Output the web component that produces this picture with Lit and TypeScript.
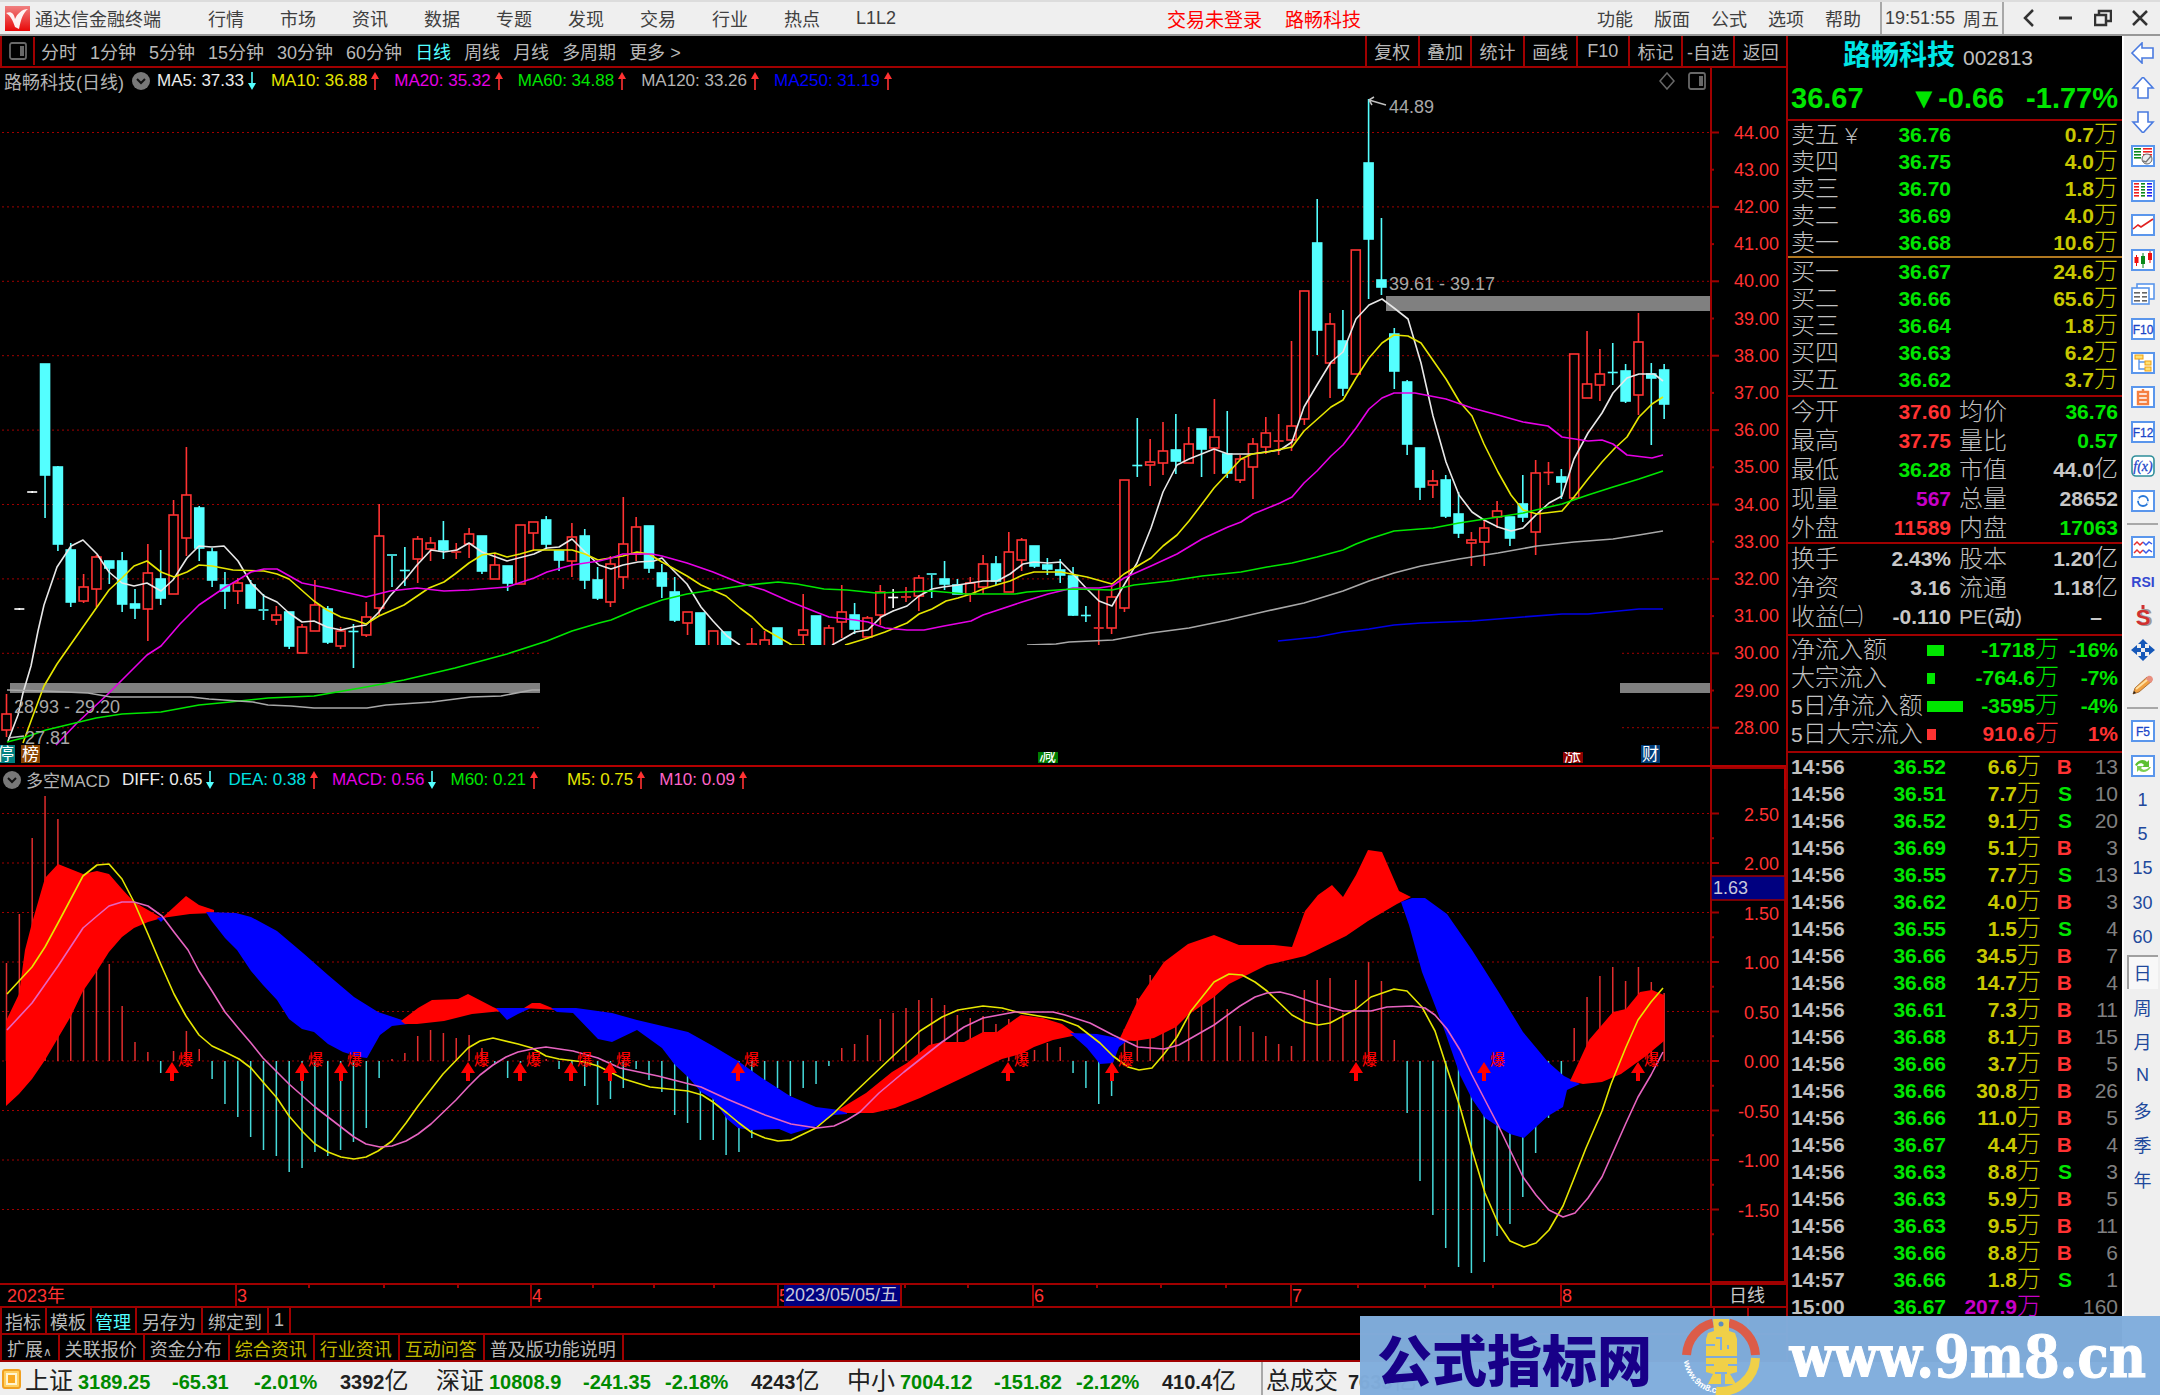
import { LitElement, html, svg, css } from "lit";
import { customElement, state } from "lit/decorators.js";
import { classMap } from "lit/directives/class-map.js";

/* ---------- quote data ---------- */

const MENU = ["行情", "市场", "资讯", "数据", "专题", "发现", "交易", "行业", "热点", "L1L2"];
const TOOLS = ["功能", "版面", "公式", "选项", "帮助"];
const PERIODS = ["分时", "1分钟", "5分钟", "15分钟", "30分钟", "60分钟", "日线", "周线", "月线", "多周期"];
const ACTIONS = ["复权", "叠加", "统计", "画线", "F10", "标记", "-自选", "返回"];

type Legend = [text: string, tone: string, up: boolean];
const MA_LEGEND: Legend[] = [
  ["MA5: 37.33", "t-white", false],
  ["MA10: 36.88", "t-yellow", true],
  ["MA20: 35.32", "t-magenta", true],
  ["MA60: 34.88", "t-green", true],
  ["MA120: 33.26", "t-gray", true],
  ["MA250: 31.19", "t-blue", true],
];
const MACD_LEGEND: Legend[] = [
  ["DIFF: 0.65", "t-white", false],
  ["DEA: 0.38", "t-cyan", true],
  ["MACD: 0.56", "t-magenta", false],
  ["M60: 0.21", "t-green", true],
  ["M5: 0.75", "t-yellow gap", true],
  ["M10: 0.09", "t-pink", true],
];

const ASKS = [["卖五", "36.76", "0.7"], ["卖四", "36.75", "4.0"], ["卖三", "36.70", "1.8"], ["卖二", "36.69", "4.0"], ["卖一", "36.68", "10.6"]];
const BIDS = [["买一", "36.67", "24.6"], ["买二", "36.66", "65.6"], ["买三", "36.64", "1.8"], ["买四", "36.63", "6.2"], ["买五", "36.62", "3.7"]];
const STATS_A = [
  ["今开", "37.60", "red", "均价", "36.76", "", "green"],
  ["最高", "37.75", "red", "量比", "0.57", "", "green"],
  ["最低", "36.28", "green", "市值", "44.0", "亿", "gray"],
  ["现量", "567", "purple", "总量", "28652", "", "gray"],
  ["外盘", "11589", "red", "内盘", "17063", "", "green"],
];
const STATS_B = [
  ["换手", "2.43%", "gray", "股本", "1.20", "亿", "gray"],
  ["净资", "3.16", "gray", "流通", "1.18", "亿", "gray"],
  ["收益㈡", "-0.110", "gray", "PE(动)", "–", "", "gray dash"],
];
const FLOWS: [string, number, string, string, string][] = [
  ["净流入额", 17, "-1718", "-16%", "green"],
  ["大宗流入", 8, "-764.6", "-7%", "green"],
  ["5日净流入额", 36, "-3595", "-4%", "green"],
  ["5日大宗流入", 9, "910.6", "1%", "red"],
];
const TICKS = [
  "14:56 36.52 6.6 B 13", "14:56 36.51 7.7 S 10", "14:56 36.52 9.1 S 20", "14:56 36.69 5.1 B 3",
  "14:56 36.55 7.7 S 13", "14:56 36.62 4.0 B 3", "14:56 36.55 1.5 S 4", "14:56 36.66 34.5 B 7",
  "14:56 36.68 14.7 B 4", "14:56 36.61 7.3 B 11", "14:56 36.68 8.1 B 15", "14:56 36.66 3.7 B 5",
  "14:56 36.66 30.8 B 26", "14:56 36.66 11.0 B 5", "14:56 36.67 4.4 B 4", "14:56 36.63 8.8 S 3",
  "14:56 36.63 5.9 B 5", "14:56 36.63 9.5 B 11", "14:56 36.66 8.8 B 6", "14:57 36.66 1.8 S 1",
  "15:00 36.67 207.9 _ 160",
].map((r) => r.split(" "));

const INDEXES = [
  ["上证", "3189.25", "-65.31", "-2.01%", "3392"],
  ["深证", "10808.9", "-241.35", "-2.18%", "4243"],
  ["中小", "7004.12", "-151.82", "-2.12%", "410.4"],
];

/* ---------- chart data ---------- */

const STEP = 12.85;
const xAt = (i: number) => 6.5 + STEP * i;

// kind, high, top, bottom, low (r = rising, f = falling, w = unchanged)
const CANDLES: [string, number, number, number, number][] = `
r 693 713 729 736|w 608 607 609 608|w 491 490 492 491|f 363 363 474 517|f 465 466 543 550|f 542 549 601 606|r 573 586 600 602|r 554 556 588 606
f 560 560 567 583|f 551 560 603 611|f 588 603 607 618|r 543 572 608 640|f 549 578 597 604|r 499 514 593 593|r 446 494 537 555|f 505 507 547 560
f 547 551 579 586|f 571 584 590 608|r 577 582 590 603|f 579 584 607 607|f 593 608 610 619|r 605 614 619 624|f 611 611 645 648|r 623 626 652 652
r 579 604 630 630|f 605 608 641 643|r 626 630 645 648|f 623 630 631 667|r 601 616 634 636|r 503 535 607 615|f 553 553 555 586|f 546 569 570 585
r 535 538 558 582|r 536 542 548 560|f 520 540 549 558|r 542 550 552 558|r 527 533 543 557|f 535 535 570 573|r 553 564 578 578|f 565 565 582 590
r 524 524 583 583|r 521 521 532 550|f 515 519 543 547|f 550 550 559 570|r 522 536 560 576|f 528 535 579 588|f 566 579 597 599|r 555 563 601 606
r 496 543 576 588|r 516 526 553 560|f 525 525 567 572|f 563 572 585 597|f 576 591 619 621|r 611 611 622 634|f 612 612 660 670|r 630 630 680 690
f 631 631 672 678|r 660 662 680 690|r 627 643 660 660|r 630 639 660 660|f 627 627 650 650|f 643 650 666 674|r 593 629 634 644|f 615 615 658 660
r 624 627 650 660|r 584 611 621 637|f 602 614 628 633|r 615 617 636 637|r 584 591 614 624|w 588 596 597 607|r 586 595 597 601|r 574 577 595 610
f 572 572 574 597|f 560 578 583 589|f 578 584 593 593|r 576 582 593 601|r 554 563 586 593|f 555 563 580 584|r 531 551 591 591|r 537 539 559 570
f 545 545 565 567|f 557 564 568 574|f 558 569 574 582|f 566 575 614 615|f 605 614 615 621|r 589 626 628 644|r 584 596 627 633|r 479 479 607 611
f 417 464 465 476|r 438 461 464 485|r 421 450 462 474|f 413 449 460 473|r 426 443 462 462|f 428 428 448 476|r 398 436 447 473|f 410 453 472 477
r 454 458 479 482|r 437 443 466 498|r 416 432 446 453|r 413 439 441 454|r 340 425 439 450|r 290 290 418 424|f 198 242 329 354|r 312 323 362 397
f 309 340 387 395|r 249 249 373 373|f 98 162 238 298|f 217 279 286 294|f 327 333 370 388|f 379 381 443 454|f 447 447 486 499|r 469 480 484 497
f 474 479 515 517|f 491 513 532 537|r 531 539 542 565|r 518 527 541 565|r 500 510 516 527|f 516 516 537 545|f 474 503 516 521|r 459 472 531 554
r 461 471 472 484|f 468 476 481 498|r 353 353 497 497|r 330 383 397 397|r 348 373 384 400|f 342 371 372 384|f 363 370 400 402|r 312 341 394 414
f 362 373 377 444|f 363 369 403 418`
  .trim()
  .split(/[|\n]/)
  .map((s) => {
    const [k, ...n] = s.trim().split(" ");
    return [k, ...n.map(Number)] as [string, number, number, number, number];
  });

const PRICE_LINES: [string, string][] = [
  ["l-white", "8,740 18,714 23,692 31,665 38,630 44,604 57,566 71,545 83,539 97,553 109,571 122,582 134,585 147,582 161,590 173,579 187,557 199,545 212,546 224,545 238,560 251,582 264,595 277,601 289,612 302,621 314,620 327,626 341,629 353,626 366,624 379,611 390,595 404,580 417,564 431,549 444,551 457,549 469,542 482,551 507,560 534,553 547,547 559,546 572,538 585,551 599,564 611,568 623,564 638,561 654,560 662,557 671,567 687,583 701,606 713,620 727,635 740,644"],
  ["l-white", "832,644 843,638 855,631 868,629 881,616 893,610 907,605 919,595 932,588 943,586 958,584 983,580 997,580 1010,573 1023,563 1034,561 1048,562 1061,561 1073,573 1087,588 1099,600 1112,605 1124,584 1137,562 1151,527 1163,491 1177,464 1189,458 1214,448 1228,453 1252,453 1280,449 1292,441 1304,406 1317,384 1331,361 1343,351 1356,318 1369,304 1382,298 1394,307 1408,318 1421,362 1433,415 1446,461 1459,494 1472,511 1484,519 1498,526 1511,530 1523,527 1537,513 1549,502 1562,495 1574,458 1588,432 1602,412 1613,392 1627,377 1639,373 1654,373 1663,380"],
  ["l-yellow", "23,742 31,720 44,685 57,663 71,643 97,606 109,589 122,577 134,565 147,560 161,571 174,576 187,571 199,564 212,565 233,569 264,570 277,573 289,578 314,600 327,609 341,616 354,619 366,623 379,615 404,604 429,587 444,581 455,573 469,562 482,554 495,552 507,556 520,553 534,549 559,549 572,549 585,553 598,559 610,557 623,555 637,551 649,553 662,561 687,575 701,584 726,595 740,607 752,616 764,628 792,644 805,644"],
  ["l-yellow", "845,644 868,637 885,631 907,622 919,613 932,608 946,600 958,597 971,593 983,588 1010,580 1023,574 1034,571 1061,571 1087,576 1112,583 1124,573 1151,557 1163,545 1177,534 1189,520 1202,503 1214,487 1228,472 1241,458 1252,453 1267,451 1292,446 1304,430 1331,406 1343,399 1356,377 1369,357 1382,342 1394,334 1408,335 1421,342 1446,378 1459,400 1472,415 1484,443 1498,471 1511,494 1523,509 1537,513 1562,510 1574,496 1588,478 1602,461 1615,447 1627,436 1639,416 1652,403 1663,396"],
  ["l-magenta", "56,744 77,722 109,692 147,654 161,645 180,623 199,604 224,587 238,579 251,571 264,568 277,568 302,582 327,587 366,596 390,590 417,587 444,590 469,589 507,586 534,577 547,571 572,564 599,560 611,557 623,553 652,553 662,555 687,562 713,571 740,582 764,589 791,601 816,611 829,616 855,619 868,621 885,627 907,629 924,629 944,625 971,620 983,614 1022,601 1048,593 1073,587 1099,587 1112,585 1124,577 1151,565 1177,553 1202,538 1228,526 1241,521 1253,513 1280,502 1292,496 1304,482 1317,470 1331,455 1343,444 1356,427 1369,408 1382,397 1394,392 1415,392 1446,398 1472,407 1498,414 1523,421 1548,425 1562,436 1588,440 1602,439 1613,443 1627,454 1652,457 1663,454"],
  ["l-green", "7,741 23,737 46,729 96,717 122,713 161,711 199,704 230,701 268,697 314,695 366,686 404,679 455,667 507,653 547,640 572,630 599,622 611,619 637,608 662,599 687,593 713,589 748,584 778,581 797,583 824,588 847,589 876,592 932,590 966,593 1015,593 1027,591 1073,588 1112,589 1134,584 1170,580 1202,575 1241,571 1267,566 1292,562 1317,556 1343,549 1356,543 1369,538 1394,530 1433,527 1459,522 1498,516 1523,512 1562,503 1588,494 1613,486 1639,478 1663,470"],
  ["l-gray", "7,689 44,690 88,692 111,696 191,696 209,698 253,701 268,704 291,705 314,707 367,707 386,704 432,701 471,696 501,695 532,689 540,689"],
  ["l-gray", "1027,644 1056,643 1069,641 1113,639 1151,632 1189,627 1228,619 1267,610 1304,602 1343,590 1369,580 1394,572 1421,565 1459,558 1498,552 1537,545 1574,541 1613,538 1639,534 1663,530"],
  ["l-blue", "1278,640 1317,636 1343,631 1369,628 1394,624 1421,622 1472,620 1523,616 1562,613 1588,613 1639,608 1663,608"],
];

const AREAS: [string, string][] = [
  ["a-red", "6,1020 19,993 25,949 32,922 45,877 58,863 83,873 97,870 109,873 122,888 134,901 148,909 162,917 148,921 134,927 122,936 109,951 97,970 83,990 71,1015 58,1037 45,1059 32,1078 19,1093 6,1105"],
  ["a-blue", "157,917 167,915 161,921"],
  ["a-red", "162,917 186,895 199,904 214,909 214,912 190,913"],
  ["a-blue", "206,911 236,912 251,916 277,930 303,952 328,974 354,996 378,1011 408,1021 408,1023 392,1025 380,1034 367,1057 359,1056 343,1051 328,1043 314,1031 302,1028 289,1018 277,999 263,984 251,970 237,949 225,937 211,919"],
  ["a-red", "401,1020 418,1007 432,999 458,998 468,993 493,1006 502,1010 472,1013 444,1020 417,1023 405,1023"],
  ["a-blue", "496,1007 531,1007 518,1013 507,1019"],
  ["a-red", "524,1007 532,1002 540,1002 557,1009"],
  ["a-blue", "551,1007 576,1007 612,1012 637,1019 688,1031 713,1045 738,1060 762,1077 790,1095 816,1106 847,1110 847,1113 834,1114 817,1125 791,1133 779,1128 751,1129 738,1127 727,1118 713,1098 701,1091 688,1076 675,1064 662,1047 637,1029 612,1041 598,1038 573,1012 557,1011"],
  ["a-red", "838,1109 866,1092 892,1071 907,1062 929,1044 942,1041 964,1041 983,1031 997,1031 1021,1014 1043,1017 1062,1023 1077,1034 1053,1039 1034,1046 1021,1053 1002,1058 958,1079 920,1097 895,1107 873,1112 847,1112"],
  ["a-blue", "1070,1032 1097,1033 1128,1039 1119,1046 1113,1062 1100,1063 1087,1047"],
  ["a-red", "1119,1039 1138,999 1164,961 1188,943 1214,934 1239,944 1274,944 1292,946 1305,910 1318,894 1332,884 1343,896 1356,874 1368,849 1382,851 1399,890 1411,896 1397,903 1368,920 1346,935 1305,955 1267,964 1229,983 1214,996 1188,1014 1176,1026 1154,1037 1135,1040"],
  ["a-blue", "1401,901 1412,897 1425,897 1447,913 1472,949 1498,990 1523,1031 1548,1061 1564,1075 1580,1083 1567,1089 1563,1106 1548,1115 1524,1137 1510,1133 1485,1117 1472,1098 1460,1074 1444,1028 1422,971 1409,924"],
  ["a-red", "1570,1080 1589,1039 1613,1011 1626,1008 1640,991 1652,989 1664,994 1664,1040 1646,1055 1621,1073 1602,1081 1583,1083"],
];

const OSC_LINES: [string, string][] = [
  ["l-yellow", "7,993 32,966 45,946 58,922 83,875 97,864 109,863 122,878 134,901 148,933 162,966 174,993 186,1015 199,1034 212,1045 225,1051 239,1058 251,1067 263,1081 277,1097 289,1115 303,1131 315,1143 328,1151 341,1156 354,1158 366,1156 378,1150 392,1140 406,1122 418,1105 443,1073 468,1047 480,1040 493,1037 518,1043 532,1047 546,1055 559,1058 584,1061 598,1065 612,1072 624,1078 650,1086 688,1090 702,1094 713,1101 727,1112 739,1122 751,1131 765,1137 778,1140 791,1139 816,1127 834,1112 854,1092 892,1056 920,1030 942,1016 958,1009 983,1005 1002,1007 1021,1012 1062,1019 1078,1025 1100,1042 1113,1055 1128,1066 1139,1069 1152,1067 1164,1053 1177,1036 1191,1010 1214,981 1229,973 1242,974 1255,981 1267,990 1292,1014 1305,1021 1318,1024 1330,1022 1356,1008 1371,996 1394,988 1407,990 1422,1006 1435,1030 1447,1067 1460,1106 1472,1149 1485,1192 1498,1222 1510,1240 1524,1246 1536,1242 1549,1229 1563,1205 1573,1180 1586,1147 1602,1110 1611,1083 1626,1046 1638,1019 1651,1001 1663,987"],
  ["l-pink", "7,1029 32,1002 58,965 83,927 97,915 109,905 122,901 134,901 148,905 162,915 174,931 188,949 199,970 212,990 225,1011 239,1028 251,1042 263,1057 289,1083 315,1106 341,1126 354,1136 366,1143 380,1146 392,1145 406,1140 418,1133 431,1123 456,1099 468,1086 480,1074 493,1064 506,1056 518,1051 532,1048 546,1046 573,1050 598,1057 620,1067 658,1075 701,1086 727,1098 765,1114 791,1123 817,1127 834,1125 847,1119 860,1111 879,1092 904,1071 942,1041 964,1026 983,1017 1015,1011 1053,1011 1065,1014 1090,1022 1113,1034 1138,1046 1164,1048 1179,1044 1214,1024 1240,1005 1255,996 1267,992 1280,991 1292,994 1318,1003 1343,1010 1371,1010 1387,1006 1412,1005 1425,1007 1435,1014 1447,1028 1460,1049 1472,1074 1498,1124 1523,1176 1536,1194 1549,1209 1563,1216 1575,1212 1588,1197 1602,1176 1626,1122 1638,1096 1651,1074 1663,1051"],
];

const BARS = `962 913 837 795 818 900 900 900 963 1005 1041 1051 1072 1050 1030 1048 1078 1103 1116 1136 1149 1155 1171 1167 1151 1155 1149 1141 1127 1077
1058 1052 1035 1029 1032 1037 1034 1047 1062 1077 1062 1052 1058 1068 1066 1085 1104 1098 1087 1068 1079 1091 1114 1122 1139 1139 1154 1151 1137 1079
1087 1095 1087 1083 1065 1047 1043 1034 1018 1012 1007 999 997 1004 1014 1017 1015 1023 1018 1025 1049 1042 1046 1072 1087 1103 1095 1028 997 974
970 970 970 980 994 1008 1025 1031 1035 1043 1045 989 979 977 1012 979 961 980 1039 1112 1180 1214 1247 1266 1272 1261 1235 1223 1196 1152
1117 1074 1027 996 975 966 980 966 981 992`
  .split(/\s+/)
  .map(Number);

const BURSTS = [172, 302, 341, 468, 520, 571, 610, 738, 1008, 1112, 1356, 1484, 1638];
const MONTHS: [number, string][] = [[236, "3"], [531, "4"], [778, "5"], [1033, "6"], [1291, "7"], [1561, "8"]];
const WEEKS = [309, 384, 458, 593, 654, 714, 905, 968, 1097, 1161, 1226, 1358, 1425, 1493];

/* ---------- toolbar icons ---------- */

const icon = (body: unknown, label: string) => html`<svg class="ico" viewBox="0 0 24 22" role="img" aria-label=${label}>${body}</svg>`;
const frame = (body: unknown, label: string) =>
  icon(svg`<rect x="1" y="1" width="22" height="20" fill="#fff" stroke="#5a96ec" stroke-width="2"/>${body}`, label);
const rows = (x: number, w: number, c: string, ys: number[]) => ys.map((y) => svg`<rect x=${x} y=${y} width=${w} height="1.6" fill=${c}/>`);
const framedText = (t: string) =>
  frame(svg`<text x="12" y="16" text-anchor="middle" font-size="12" font-family="Liberation Sans, sans-serif" fill="#1c45c8" stroke="#1c45c8" stroke-width=".3">${t}</text>`, t);

const SIDE_A = [
  icon(svg`<path d="M1 11 11 1v5h11v10H11v5z" fill="#fff" stroke="#4a7be0" stroke-width="1.6"/>`, "后退"),
  icon(svg`<path d="M12 0 2 11h5v10h10V11h5z" fill="#fff" stroke="#4a7be0" stroke-width="1.6"/>`, "上一个"),
  icon(svg`<path d="M12 22 2 11h5V1h10v10h5z" fill="#fff" stroke="#4a7be0" stroke-width="1.6"/>`, "下一个"),
  frame(svg`${rows(3, 7, "#0a8a1a", [3, 6, 9, 12])}${rows(12, 9, "#f02020", [3, 6, 9])}<circle cx="16" cy="14" r="5" fill="#eee" stroke="#666"/><path d="M12 16l3 1 5-6" fill="none" stroke="#777" stroke-width="1.4"/>`, "行情"),
  frame(svg`${rows(3, 5, "#f02020", [3, 6, 9, 12, 15])}${rows(10, 4, "#0a8a1a", [3, 6, 9, 12, 15])}${rows(16, 5, "#2020f0", [3, 6, 9, 12, 15])}`, "多列"),
  frame(svg`<path d="M2 15l5-4 3 2 6-4 6-4" fill="none" stroke="#e02020" stroke-width="1.6"/>`, "走势"),
  frame(svg`<path d="M5.500 6v11M19 2v12" stroke="#f01010"/><rect x="3.500" y="8" width="4" height="6" fill="#f01010"/><rect x="17" y="4" width="4" height="7" fill="#f01010"/><path d="M12 4v15" stroke="#0a8a1a"/><rect x="10" y="7" width="4" height="8" fill="#0a8a1a"/>`, "K线"),
  icon(svg`<rect x="6" y="1" width="17" height="15" fill="#fff" stroke="#5a96ec" stroke-width="1.6"/><rect x="1" y="5" width="17" height="16" fill="#fff" stroke="#5a96ec" stroke-width="1.6"/>${rows(3, 6, "#666", [9, 13, 17])}${rows(11, 5, "#666", [9, 13, 17])}`, "报表"),
  framedText("F10"),
  frame(svg`<path d="M8 6v11h6M8 10h6" fill="none" stroke="#5a96ec" stroke-width="1.4"/><rect x="4" y="3" width="8" height="4" fill="#ffe070" stroke="#f0a010"/><rect x="14" y="9" width="6" height="4" fill="#ffe070" stroke="#f0a010"/><rect x="14" y="15" width="6" height="4" fill="#ffe070" stroke="#f0a010"/>`, "板块树"),
  frame(svg`<path d="M12 3v3M7 6h10v12H7zM7 10h10M7 14h10" fill="none" stroke="#f58040" stroke-width="2.400"/>`, "自选"),
  framedText("F12"),
  icon(svg`<rect x="1" y="1" width="22" height="20" rx="4" fill="#fff" stroke="#2f8f9a" stroke-width="1.600"/><text x="12" y="15.500" text-anchor="middle" font-size="14" font-style="italic" font-family="Liberation Serif, serif" fill="#1c45c8" stroke="#1c45c8" stroke-width=".3">f(x)</text>`, "公式"),
  frame(svg`<circle cx="12" cy="11" r="5" fill="none" stroke="#2878d8" stroke-width="1.800"/><path d="M7 8l0 3M17 14v-3" stroke="#fff" stroke-width="1.500"/>`, "周期"),
];
const SIDE_B = [
  frame(svg`<path d="M3 9l3-3 3 3 3-3M3 17l3-3 3 3 3-3" fill="none" stroke="#e83030" stroke-width="1.500"/><path d="M12 6l3 3 3-3 3 2M12 14l3 3 3-3 3 2" fill="none" stroke="#3a5ae8" stroke-width="1.500"/>`, "指标"),
  icon(svg`<text x="12" y="16" text-anchor="middle" font-size="14" font-weight="700" font-family="Liberation Sans, sans-serif" fill="#3448d0">RSI</text>`, "RSI"),
  icon(svg`<text x="14" y="21" text-anchor="middle" font-size="23" font-weight="700" font-family="Liberation Sans, sans-serif" fill="#999">S</text><text x="12" y="20" text-anchor="middle" font-size="22" font-weight="700" font-family="Liberation Sans, sans-serif" fill="#d03030">S</text><path d="M12 0v4" stroke="#d03030" stroke-width="3"/>`, "资金"),
  icon(svg`<path d="M12 0l5 5h-3v4h4V6l6 5-6 5v-3h-4v4h3l-5 5-5-5h3v-4H6v3L0 11l6-5v3h4V5H7z" fill="#1658b8"/><rect x="10" y="9" width="4" height="4" fill="#eee"/>`, "移动"),
  icon(svg`<path d="M2 20l2-6L16 3l5 4L8 18z" fill="#f0a040" stroke="#a06020" stroke-width=".800"/><path d="M14 5l3-3c3-1 5 1 5 4l-2 3z" fill="#e89080"/><path d="M5 15 16 6" stroke="#ffe0a0" stroke-width="2"/><path d="M2 20l1-3 2 2z" fill="#222"/>`, "画线"),
];
const SIDE_C = [
  framedText("F5"),
  frame(svg`<path d="M4 10c3-6 10-6 12-3l2-2v7h-7l2-2c-2-3-6-2-7 1z" fill="#5cc030"/><path d="M20 12c-3 6-10 6-12 3l-2 2v-6h6l-2 2c2 3 6 2 8-1z" fill="#7ccf50"/>`, "刷新"),
  ..."1 5 15 30 60 日 周 月 N 多 季 年".split(" "),
];

/* ---------- shared text tones ---------- */

const tones = css`
  .t-white { color: #ececec; }
  .t-yellow { color: #e6e600; }
  .t-magenta { color: #e600e6; }
  .t-green { color: #00e600; }
  .t-gray { color: #b4b4b4; }
  .t-blue { color: #0000ff; }
  .t-cyan { color: #00e0e0; }
  .t-pink { color: #ff64c8; }
  .red { color: #ff3232; }
  .green { color: #00e600; }
  .gray { color: #c8c8c8; }
  .purple { color: #c800c8; }
  button { font: inherit; color: inherit; background: none; border: 0; padding: 0; margin: 0; cursor: pointer; }
`;

@customElement("stock-charts")
export class StockCharts extends LitElement {
  static styles = [
    tones,
    css`
      :host { display: block; color: #b4b4b4; font-size: 17px; }
      svg { display: block; width: 100%; }
      .head { display: grid; grid-template-columns: 1fr 74px; height: 25px; }
      .head.low { border-top: 2px solid #b40000; height: 22px; }
      .legend { display: flex; align-items: center; padding-left: 4px; border-right: 2px solid #a00000; white-space: nowrap; }
      .low .legend { padding-left: 3px; }
      .low .rest { border-top: 2px solid #a00000; border-right: 2px solid #b40000; }
      .name { font-size: 18px; margin-right: 8px; }
      .low .name { order: 1; margin: 0 12px 0 5px; font-size: 17px; }
      .fold { width: 18px; height: 18px; margin-right: 7px; }
      .low .fold { margin-right: 0; }
      .item { display: flex; align-items: center; gap: 4px; margin-right: 15px; order: 2; }
      .low .item { margin-right: 14px; }
      .low .gap { margin-left: 15px; }
      .item svg { width: 8px; height: 18px; }
      .corner { display: flex; gap: 12px; margin-left: auto; margin-right: 4px; order: 3; }
      .corner svg { width: 18px; height: 18px; }
      text { font-family: "Liberation Sans", "Noto Sans CJK SC", sans-serif; font-size: 18px; }
      .axis { fill: #ff3232; text-anchor: end; }
      .mark { fill: #a8a8a8; }
      .grid { stroke: #a00000; stroke-dasharray: 2 3; }
      .rule { stroke: #a00000; stroke-width: 2; fill: none; }
      .line { fill: none; stroke-width: 1.6; stroke-linejoin: round; }
      .l-white { stroke: #e8e8e8; }
      .l-yellow { stroke: #e6e600; }
      .l-magenta { stroke: #e600e6; }
      .l-green { stroke: #00e600; }
      .l-gray { stroke: #a8a8a8; }
      .l-blue { stroke: #0000e6; }
      .l-pink { stroke: #e664c0; }
      .a-red { fill: #ff0000; }
      .a-blue { fill: #0000ff; }
      .r { fill: #000; stroke: #ff3232; }
      .f { fill: #54ffff; stroke: #54ffff; }
      .w { fill: #fff; stroke: #fff; }
      .wick, .body { stroke-width: 1.6; }
      .up { stroke: #e02c2c; stroke-width: 1.5; }
      .down { stroke: #46dada; stroke-width: 1.5; }
      .burst { fill: #ff0000; font-size: 15px; font-weight: 500; }
      .badge { fill: #fff; font-size: 17px; }
      .cursor { fill: #c8c8dc; }
      .cut { overflow: hidden; width: 20px; }
    `,
  ];

  private legend(items: Legend[]) {
    return items.map(
      ([t, tone, up]) => html`<span class="item ${tone}">${t}
        <svg viewBox="0 0 8 18" aria-hidden="true">${up
          ? svg`<path d="M4 18V2" stroke="#ff3232" stroke-width="1.600"/><path d="M4 0l4 7H0z" fill="#ff3232"/>`
          : svg`<path d="M4 0v16" stroke="#54ffff" stroke-width="1.600"/><path d="M4 18l4-7H0z" fill="#54ffff"/>`}</svg></span>`
    );
  }

  private fold() {
    return html`<button class="fold" aria-label="指标菜单"><svg viewBox="0 0 18 18"><circle cx="9" cy="9" r="9" fill="#787878"/><path d="M5 7l4 4 4-4" fill="none" stroke="#111" stroke-width="2"/></svg></button>`;
  }

  private candle([k, h, t, b, l]: [string, number, number, number, number], i: number) {
    const x = xAt(i);
    const flat = b - t < 3;
    return svg`<g class=${k}>
      <path class="wick" d="M${x} ${h}V${t}M${x} ${b}V${l}"/>
      ${flat ? svg`<path class="body" d="M${x - 5} ${(t + b) / 2}h10"/>` : svg`<rect class="body" x=${x - 4.5} y=${t} width="9" height=${b - t}/>`}
    </g>`;
  }

  private priceChart() {
    const y = (p: number) => 131.5 + (44 - p) * 37.2;
    const prices = Array.from({ length: 17 }, (_, i) => 44 - i);
    return svg`
      <defs><clipPath id="plot"><path d="M0 92H1710V765H1620V644H540V765H0z"/></clipPath></defs>
      ${prices.filter((p) => p % 2 === 0).map((p) => svg`<path class="grid" clip-path="url(#plot)" d="M2 ${y(p)}H1710"/>`)}
      ${prices.map((p) => svg`<path class="rule" stroke-width="1" d="M1711 ${y(p)}h${p % 2 ? 3 : 8}"/><text class="axis" x="1779" y=${y(p) + 6}>${p.toFixed(2)}</text>`)}
      <g clip-path="url(#plot)">
        ${CANDLES.map((c, i) => this.candle(c, i))}
        <path d="M10 682H540V692H10zM1620 682H1711V692H1620zM1386 295H1711V310H1386z" fill="#808080"/>
        ${PRICE_LINES.map(([c, p]) => svg`<polyline class="line ${c}" points=${p}/>`)}
      </g>
      <g class="mark">
        <text x="14" y="712">28.93 - 29.20</text>
        <text x="25" y="743">27.81</text>
        <text x="1389" y="112">44.89</text>
        <text x="1389" y="289">39.61 - 39.17</text>
      </g>
      <path d="M8 737l16-2M1369 99l17 5M1369 99l5-3M1369 99l3 5" stroke="#c0c0c0" stroke-width="1.500" fill="none"/>
      <rect x="0" y="744" width="15" height="18" fill="#008080"/><text class="badge" x="-3" y="759">停</text>
      <rect x="21" y="744" width="19" height="18" fill="#8a4400"/><text class="badge" x="22" y="759">榜</text>
      <svg class="cut" x="1038" y="751" width="20" height="11"><rect width="20" height="11" fill="#007c00"/><text class="badge" x="1" y="9">减</text></svg>
      <svg class="cut" x="1563" y="751" width="20" height="11"><rect width="20" height="11" fill="#8c0000"/><text class="badge" x="1" y="9">涨</text></svg>
      <rect x="1641" y="744" width="19" height="18" fill="#003c78"/><text class="badge" x="1642" y="759">财</text>
      <path class="rule" d="M1711 90V766"/>`;
  }

  private oscillator() {
    const y = (v: number) => 1060 - v * 99;
    const levels = [2.5, 2, 1.5, 1, 0.5, 0, -0.5, -1, -1.5];
    return svg`
      ${levels.map((v) => svg`<path class="grid" d="M2 ${y(v)}H1710"/><path class="rule" stroke-width="1" d="M1711 ${y(v)}h8M1711 ${y(v - 0.25)}h3"/><text class="axis" x="1779" y=${y(v) + 7}>${v.toFixed(2)}</text>`)}
      ${BARS.map((b, i) => svg`<path class=${b < 1060 ? "up" : "down"} d="M${xAt(i)} 1060V${b}"/>`)}
      ${AREAS.map(([c, p]) => svg`<polygon class=${c} points=${p}/>`)}
      ${OSC_LINES.map(([c, p]) => svg`<polyline class="line ${c}" points=${p}/>`)}
      ${BURSTS.map((x) => svg`<path d="M${x} 1061l7 11h-5v8h-4v-8h-5z" fill="#f00"/><text class="burst" x=${x + 6} y="1064">爆</text>`)}
      <path class="rule" d="M1711 787V1281H1785V787"/>
      <rect x="1711" y="875" width="74" height="24" fill="#000080" stroke="#a00000" stroke-width="1.500"/>
      <text class="cursor" x="1713" y="893">1.63</text>
      <path class="rule" d="M0 1283H1786M0 1306H1786M1711 1283V1306"/>
      ${WEEKS.map((x) => svg`<path class="rule" stroke-width="1" d="M${x} 1283v4"/>`)}
      <text x="7" y="1301" fill="#ff3232">2023年</text>
      ${MONTHS.map(([x, m]) => svg`<path class="rule" stroke-width="1" d="M${x} 1283v23"/><text x=${x + 1} y="1301" fill="#ff3232">${m}</text>`)}
      <rect x="784" y="1284" width="117" height="21" fill="#000080"/><path class="rule" d="M901 1283v23"/>
      <text class="cursor" x="785" y="1300">2023/05/05/五</text>
      <text x="1729" y="1301" fill="#c8c8c8">日线</text>`;
  }

  render() {
    return html`
      <div class="head">
        <div class="legend"><span class="name">路畅科技(日线)</span>${this.fold()}${this.legend(MA_LEGEND)}
          <span class="corner">
            <svg viewBox="0 0 18 18"><path d="M9 1l7 8-7 8-7-8z" fill="none" stroke="#686868" stroke-width="1.500"/></svg>
            <svg viewBox="0 0 18 18"><rect x="1" y="1" width="16" height="16" rx="2" fill="none" stroke="#686868" stroke-width="1.800"/><path d="M11 4h4v10h-4z" fill="#686868"/></svg>
          </span>
        </div><div class="rest"></div>
      </div>
      <svg viewBox="0 92 1786 672" role="img" aria-label="路畅科技 日线 K线图">${this.priceChart()}</svg>
      <div class="head low">
        <div class="legend">${this.fold()}<span class="name">多空MACD</span>${this.legend(MACD_LEGEND)}</div><div class="rest"></div>
      </div>
      <svg viewBox="0 788 1786 519" role="img" aria-label="多空MACD 指标图">${this.oscillator()}</svg>`;
  }
}

@customElement("quote-panel")
export class QuotePanel extends LitElement {
  static styles = [
    tones,
    css`
      :host { display: block; border-left: 2px solid #a00000; color: #c0c0c0; font-size: 21px; font-weight: 700; white-space: nowrap; overflow: hidden; contain: size; }
      .title { display: flex; align-items: baseline; justify-content: center; gap: 8px; height: 40px; padding-right: 34px; line-height: 40px; margin: 0; font-size: 21px; }
      .stock { font-size: 28px; color: #00e6e6; }
      .code { font-weight: 400; }
      .last { display: flex; justify-content: space-between; height: 43px; line-height: 44px; font-size: 29px; padding: 0 4px 0 3px; }
      .last b:nth-child(2) { margin-left: 24px; }
      table { width: 100%; border-collapse: collapse; table-layout: fixed; border-top: 2px solid #a00000; }
      td, th { padding: 0; height: 27px; line-height: 26px; text-align: right; font-weight: 700; overflow: visible; }
      th { text-align: left; font-weight: 300; font-size: 24px; padding-left: 3px; }
      th b, th .yen { font-size: 21px; line-height: 1; }
      .yen { margin-left: 2px; }
      .unit { font-size: 24px; font-weight: 300; line-height: 1; }
      .amount { color: #c8c800; }
      td:last-child { padding-right: 4px; }
      .c1 { width: 68px; }
      .c2 { width: 95px; }
      .c3 { width: 75px; }
      .bids { border-top-color: #b07820; border-image: linear-gradient(90deg, #b07820 82%, #2870b0 82%) 1; margin-bottom: 2px; }
      .bids tr:first-child td, .bids tr:first-child th { height: 28px; }
      .stats td, .stats th, .flow td, .flow th { height: 29px; line-height: 28px; }
      .stats th + td + th { padding-left: 8px; }
      .ratio tr:last-child td, .ratio tr:last-child th { padding-bottom: 3px; }
      .dash { padding-right: 20px !important; }
      th.pe { font-size: 21px; font-weight: 500; }
      .flow { margin-bottom: 3px; }
      .flow td, .flow th { height: 28px; }
      .flow .c1 { width: 139px; }
      .flow .c2 { width: 40px; }
      .flow .c3 { width: 92px; }
      .bar { display: block; height: 11px; background: currentColor; }
      .ticks .c1 { width: 60px; }
      .ticks .c2 { width: 98px; }
      .ticks .c3 { width: 95px; }
      .ticks .c4 { width: 31px; }
      .ticks td:first-child { text-align: left; padding-left: 3px; }
      .ticks td:last-child { color: #808080; font-weight: 400; }
    `,
  ];

  private depth(list: string[][], kind: string) {
    return html`<table class=${kind} aria-label=${kind === "bids" ? "买盘" : "卖盘"}>
      <colgroup><col class="c1"><col class="c2"><col></colgroup>
      ${list.map(([n, p, v]) => html`<tr><th scope="row">${n}${n === "卖五" ? html`<span class="yen">￥</span>` : ""}</th><td class="green">${p}</td><td class="amount">${v}<span class="unit">万</span></td></tr>`)}
    </table>`;
  }

  private stats(list: string[][], extra = "") {
    return html`<table class="stats ${extra}">
      <colgroup><col class="c1"><col class="c2"><col class="c3"><col></colgroup>
      ${list.map(([a, v, c, b, w, u, d]) => html`<tr><th scope="row">${a}</th><td class=${c}>${v}</td><th scope="row" class=${b[0] === "P" ? "pe" : ""}>${b}</th><td class=${d}>${w}<span class="unit">${u}</span></td></tr>`)}
    </table>`;
  }

  render() {
    return html`
      <h1 class="title"><span class="stock">路畅科技</span><span class="code">002813</span></h1>
      <div class="last green"><b>36.67</b><b>▼-0.66</b><b>-1.77%</b></div>
      ${this.depth(ASKS, "asks")}${this.depth(BIDS, "bids")}
      ${this.stats(STATS_A)}${this.stats(STATS_B, "ratio")}
      <table class="flow" aria-label="资金流向">
        <colgroup><col class="c1"><col class="c2"><col class="c3"><col></colgroup>
        ${FLOWS.map(([n, w, v, p, c]) => html`<tr><th scope="row">${n[0] === "5" ? html`<b>5</b>${n.slice(1)}` : n}</th><td class=${c}><span class="bar" style="width:${w}px"></span></td><td class=${c}>${v}<span class="unit">万</span></td><td class=${c}>${p}</td></tr>`)}
      </table>
      <table class="ticks" aria-label="分笔成交">
        <colgroup><col class="c1"><col class="c2"><col class="c3"><col class="c4"><col></colgroup>
        ${TICKS.map(([t, p, v, s, n]) => html`<tr><td>${t}</td><td class="green">${p}</td><td class=${s === "_" ? "purple" : "amount"}>${v}<span class="unit">万</span></td><td class=${s === "B" ? "red" : "green"}>${s === "_" ? "" : s}</td><td>${n}</td></tr>`)}
      </table>`;
  }
}

@customElement("side-tools")
export class SideTools extends LitElement {
  @state() private current = "日";
  static styles = [
    tones,
    css`
      :host { display: block; background: #efefef; border-left: 2px solid #fff; color: #20489c; font-size: 18px; contain: size; overflow: hidden; }
      .group { display: grid; grid-auto-rows: 1fr; height: 482px; border-bottom: 2px solid #a8a8a8; margin: 0 2px 5px 3px; padding-bottom: 5px; }
      .group.mid { height: 172px; }
      .group.end { border: 0; }
      button { display: grid; place-items: center; width: 100%; }
      button.on { background: #f8f8f8; box-shadow: inset 2px 2px 0 #a0a0a0; }
      .ico { display: block; width: 24px; height: 22px; }
    `,
  ];

  render() {
    return html`
      <div class="group">${SIDE_A.map((i) => html`<button>${i}</button>`)}</div>
      <div class="group mid">${SIDE_B.map((i) => html`<button>${i}</button>`)}</div>
      <div class="group end">${SIDE_C.map((i) => typeof i === "string"
        ? html`<button class=${classMap({ on: i === this.current })} @click=${() => (this.current = i)}>${i}</button>`
        : html`<button>${i}</button>`)}</div>`;
  }
}

@customElement("app-root")
export class AppRoot extends LitElement {
  @state() private period = "日线";

  static styles = [
    tones,
    css`
      :host { display: block; position: relative; background: #000; font-family: "Liberation Sans", "Noto Sans CJK SC", sans-serif; font-size: 18px; color: #b8b8b8; overflow: hidden; }
      .menu { display: flex; align-items: center; height: 36px; padding: 0 11px 0 5px; background: #efefef; color: #404040; border-top: 2px solid #dcdcdc; border-bottom: 2px solid #989898; white-space: nowrap; box-sizing: border-box; }
      .logo { width: 25px; height: 25px; margin-right: 5px; }
      .brand { margin-right: 47px; }
      nav { display: flex; gap: 36px; }
      .notice { display: flex; gap: 23px; margin: 0 11% 0 auto; color: #ff0000; font-size: 19px; }
      .tools { display: flex; gap: 21px; }
      .clock { display: flex; gap: 8px; align-items: center; height: 32px; margin-left: 19px; padding: 0 3px; border: solid #a8a8a8; border-width: 0 2px; }
      .window { display: flex; gap: 19px; margin-left: 16px; }
      .window svg { display: block; width: 18px; height: 18px; }
      .main { display: grid; grid-template-columns: minmax(0, 1fr) 336px 38px; }
      .periods { display: flex; align-items: center; height: 30px; border-bottom: 2px solid #a00000; border-left: 2px solid #a00000; white-space: nowrap; box-sizing: content-box; }
      .tabs { display: flex; gap: 13px; margin-left: 6px; }
      .on { color: #54ffff; }
      .pane { display: grid; place-items: center; width: 33px; height: 28px; border-right: 2px solid #a00000; }
      .pane svg { width: 18px; height: 18px; }
      .actions { display: grid; grid-template-columns: repeat(8, 1fr); width: 421px; height: 30px; margin-left: auto; }
      .actions button { border-left: 2px solid #a00000; }
      .strip { display: flex; height: 25px; border-bottom: 2px solid #a00000; border-left: 2px solid #a00000; }
      .strip button { border-right: 2px solid #a00000; padding: 0 6px 0 5px; white-space: nowrap; }
      .strip.first button { padding: 0 5px 0 5px; }
      .strip.first button:nth-child(-n + 3) { padding: 0 4px 0 3px; }
      .strip .zoom { margin-left: auto; width: 36px; border-left: 2px solid #a00000; margin-right: 37px; }
      .caret { font: 12px "DejaVu Sans", sans-serif; }
      .dim { color: #c0b800; }
      .status { display: flex; align-items: center; height: 35px; background: #efefef; color: #202020; font-size: 24px; white-space: nowrap; overflow: hidden; padding-bottom: 2px; box-sizing: border-box; }
      .status b { font-size: 20px; }
      .status .mark { width: 19px; height: 20px; margin: 0 4px 0 2px; }
      .index { display: grid; grid-template-columns: 53px 94px 82px 86px 96px; align-items: baseline; }
      .index b { color: #008a00; }
      .index b.sum { color: #202020; }
      .total { display: flex; align-items: baseline; gap: 10px; border-left: 2px solid #a8a8a8; padding-left: 3px; margin-left: 3px; }
      .ad { position: absolute; right: 0; bottom: 0; display: flex; align-items: center; width: 800px; height: 81px; box-sizing: border-box; padding: 0 14px 0 17px; justify-content: space-between; background: rgba(129, 173, 220, 0.98); text-decoration: none; white-space: nowrap; overflow: hidden; }
      .site { color: #180088; font: 900 55px/80px "Noto Sans CJK SC", sans-serif; }
      .seal { width: 78px; height: 78px; }
      .url { color: #fff; font: 700 57px/70px "DejaVu Serif Condensed", "DejaVu Serif", serif; -webkit-text-stroke: 1px #fff; }
    `,
  ];

  render() {
    return html`
      <header class="menu">
        <svg class="logo" viewBox="0 0 25 25" aria-hidden="true">
          <defs><linearGradient id="lg" x2="0" y2="1"><stop stop-color="#f08080"/><stop offset="1" stop-color="#e80808"/></linearGradient></defs>
          <rect width="25" height="25" fill="url(#lg)"/><path d="M1 7C6 5 9 7 10 13 12 8 17 3 23 3 18 7 16 13 14 23l-4-2C8 15 6 10 1 7z" fill="#fff" opacity=".93"/>
        </svg>
        <span class="brand">通达信金融终端</span>
        <nav>${MENU.map((m) => html`<button>${m}</button>`)}</nav>
        <div class="notice"><button>交易未登录</button><button>路畅科技</button></div>
        <div class="tools">${TOOLS.map((m) => html`<button>${m}</button>`)}</div>
        <div class="clock"><time>19:51:55</time><span>周五</span></div>
        <div class="window">
          <button aria-label="收起"><svg viewBox="0 0 18 18"><path d="M13 1 5 9l8 8" fill="none" stroke="#333" stroke-width="2.500"/></svg></button>
          <button aria-label="最小化"><svg viewBox="0 0 18 18"><path d="M2 9h13" stroke="#333" stroke-width="3"/></svg></button>
          <button aria-label="还原"><svg viewBox="0 0 18 18"><path d="M5 5V2h12v10h-4M1 6h11v10H1z" fill="none" stroke="#333" stroke-width="2.500"/></svg></button>
          <button aria-label="关闭"><svg viewBox="0 0 18 18"><path d="M2 2l14 14M16 2 2 16" stroke="#333" stroke-width="2.500"/></svg></button>
        </div>
      </header>
      <div class="main">
        <main>
          <div class="periods">
            <button class="pane" aria-label="侧栏"><svg viewBox="0 0 18 18"><rect x="1" y="1" width="16" height="16" rx="2" fill="none" stroke="#686868" stroke-width="1.800"/><path d="M11 4h4v10h-4z" fill="#686868"/></svg></button>
            <div class="tabs">
              ${PERIODS.map((p) => html`<button class=${classMap({ on: p === this.period })} @click=${() => (this.period = p)}>${p}</button>`)}
              <button>更多 &gt;</button>
            </div>
            <div class="actions">${ACTIONS.map((a) => html`<button>${a}</button>`)}</div>
          </div>
          <stock-charts></stock-charts>
          <div class="strip first">
            <button>指标</button><button>模板</button><button class="on">管理</button><button>另存为</button><button>绑定到</button><button>1</button><button class="zoom">↑</button>
          </div>
          <div class="strip second">
            <button>扩展<span class="caret">∧</span></button><button>关联报价</button><button>资金分布</button><button class="dim">综合资讯</button><button class="dim">行业资讯</button><button class="dim">互动问答</button><button>普及版功能说明</button>
          </div>
        </main>
        <quote-panel></quote-panel>
        <side-tools></side-tools>
      </div>
      <footer class="status">
        <svg class="mark" viewBox="0 0 19 20" aria-hidden="true"><rect x="1" y="1" width="17" height="18" rx="2" fill="#ffd060" stroke="#f0a020" stroke-width="2"/><rect x="4" y="4" width="11" height="12" fill="#fff4d0"/><rect x="6" y="6" width="7" height="8" fill="#f8a820"/></svg>
        ${INDEXES.map(([n, p, d, r, s]) => html`<div class="index"><span>${n}</span><b>${p}</b><b>${d}</b><b>${r}</b><span><b class="sum">${s}</b>亿</span></div>`)}
        <div class="total"><span>总成交</span><span><b>7635</b>亿</span></div>
      </footer>
      <a class="ad" href="http://www.9m8.cn">
        <span class="site">公式指标网</span>
        <svg class="seal" viewBox="0 0 78 78" aria-hidden="true">
          <path d="M31 5A35 35 0 0 0 4.500 37M47 5A35 35 0 0 1 73.500 37" fill="none" stroke="#dc5c48" stroke-width="9"/>
          <path d="M73.500 40A35 35 0 0 1 34 73.200" fill="none" stroke="#f0d048" stroke-width="9"/>
          <path fill="#f0d048" d="M31 1h16v12l6 2 2 6v17H24V21l2-6 6-2zM24 40h31v14l-7 2 6 10H43V54h-4v12H26l5-10-7-2z"/>
          <circle cx="39" cy="6" r="2.500" fill="#5c8cc0"/>
          <path d="M34 20h5v12M24 27h9M46 27v4M24 47h8M46 47h9M33 55h12" fill="none" stroke="#82addc" stroke-width="2"/>
          <path id="rim" d="M2 43A37 37 0 0 0 33 75" fill="none"/>
          <text font-family="Liberation Sans, sans-serif" font-size="9" font-weight="700" fill="#fff"><textPath href="#rim">www.9m8.cn</textPath></text>
        </svg>
        <span class="url">www.9m8.cn</span>
      </a>`;
  }
}
